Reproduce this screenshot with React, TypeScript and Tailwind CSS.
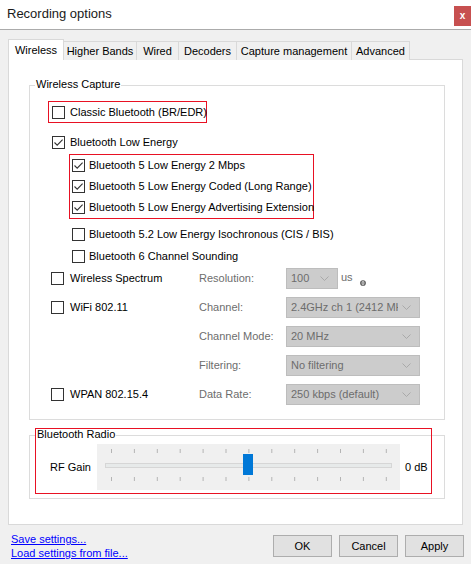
import React from 'react';

const tabs = [
  { name: 'Wireless', w: 'w-[56px]' },
  { name: 'Higher Bands', w: 'w-[74px]' },
  { name: 'Wired', w: 'w-[43px]' },
  { name: 'Decoders', w: 'w-[59px]' },
  { name: 'Capture management', w: 'w-[116px]' },
  { name: 'Advanced', w: 'w-[59px]' },
];

function Check({ checked }: { checked?: boolean }) {
  return (
    <span className="w-[13px] h-[13px] border border-[#333333] bg-white flex items-center justify-center shrink-0">
      {checked && (
        <svg width="11" height="11" viewBox="0 0 11 11">
          <path d="M1.5 5.5 L4.2 8.2 L9.6 2.6" stroke="#333333" strokeWidth="1.1" fill="none" />
        </svg>
      )}
    </span>
  );
}

function Select({ value, w }: { value: string; w: string }) {
  return (
    <div className={`h-[21px] ${w} bg-[#cccccc] border border-[#bdbdbd] flex items-center pl-[4px] pr-[8px] text-[#6d6d6d]`}>
      <span className="flex-1 overflow-hidden whitespace-nowrap">{value}</span>
      <svg width="9" height="5" viewBox="0 0 9 5" className="shrink-0 ml-[4px]">
        <path d="M0.5 0.5 L4.5 4.5 L8.5 0.5" stroke="#a9a9a9" fill="none" />
      </svg>
    </div>
  );
}

function OptionRow({ label, checked, select, selectW, value, extra }: any) {
  return (
    <div className="h-[21px] flex items-center">
      <div className="w-[169px] pl-[21px] flex items-center gap-[6px]">
        {label && <Check checked={checked} />}
        {label && <span className="whitespace-nowrap">{label}</span>}
      </div>
      <span className="w-[87px] text-[#6d6d6d] whitespace-nowrap">{select}</span>
      <Select value={value} w={selectW} />
      {extra}
    </div>
  );
}

function Slider() {
  const ticks = Array.from({ length: 13 }, (_, i) => 14.5 + i * 22.9);
  return (
    <svg width="303" height="46" viewBox="0 0 303 46" className="bg-[#f0f0f0] shrink-0">
      {ticks.map((x) => (
        <g key={x}>
          <line x1={x} y1="5" x2={x} y2="9" stroke="#b4b4b4" />
          <line x1={x} y1="33" x2={x} y2="37" stroke="#b4b4b4" />
        </g>
      ))}
      <rect x="8.5" y="19.5" width="286" height="4" fill="#e7eaea" stroke="#d6d6d6" />
      <rect x="146" y="10" width="10" height="21" fill="#0078d7" />
    </svg>
  );
}

export default function App() {
  return (
    <div className="w-[471px] h-[564px] bg-[#f0f0f0] text-[11px] text-black font-['Liberation_Sans',Arial,sans-serif] leading-none overflow-hidden">
      {/* Title bar */}
      <div className="h-[30px] bg-white border-b border-[#ababab] flex items-start">
        <span className="ml-[7px] mt-[7px] text-[13px] text-[#1a1a1a]">Recording options</span>
        <div className="ml-auto mt-[6px] w-[17px] h-[20px] bg-[#c75050] text-white text-[10px] font-bold flex items-center justify-center">
          x
        </div>
      </div>

      {/* Tabs */}
      <div className="flex items-end ml-[8px] mt-[9px] h-[21px] relative z-10">
        {tabs.map((t, i) =>
          i === 0 ? (
            <div key={t.name} className={`${t.w} h-[21px] bg-white border border-b-0 border-[#d9d9d9] flex items-center justify-center whitespace-nowrap`}>
              {t.name}
            </div>
          ) : (
            <div key={t.name} className={`${t.w} h-[19px] -ml-px bg-[#f0f0f0] border border-b-0 border-[#d9d9d9] flex items-center justify-center whitespace-nowrap`}>
              {t.name}
            </div>
          )
        )}
      </div>

      {/* Panel */}
      <div className="ml-[8px] -mt-px w-[455px] h-[466px] bg-white border border-[#d9d9d9] pt-[25px] pl-[20px]">
        {/* Wireless Capture */}
        <div className="relative w-[416px] h-[335px] border border-[#dcdcdc]">
          <span className="absolute -top-[7px] left-[5px] bg-white px-[1px]">Wireless Capture</span>

          <div className="mt-[15px] ml-[18px] w-[159px] h-[22px] border border-[#e81123] pl-[3px] flex items-center gap-[5px]">
            <Check />
            <span className="whitespace-nowrap">Classic Bluetooth (BR/EDR)</span>
          </div>

          <div className="h-[23px] mt-[8px] pl-[22px] flex items-center gap-[5px]">
            <Check checked />
            <span>Bluetooth Low Energy</span>
          </div>

          <div className="ml-[39px] w-[245px] h-[65px] border border-[#e81123] pl-[2px] flex flex-col justify-between py-[1px]">
            {['Bluetooth 5 Low Energy 2 Mbps', 'Bluetooth 5 Low Energy Coded (Long Range)', 'Bluetooth 5 Low Energy Advertising Extension'].map((l) => (
              <div key={l} className="h-[19px] flex items-center gap-[4px]">
                <Check checked />
                <span className="whitespace-nowrap">{l}</span>
              </div>
            ))}
          </div>

          <div className="mt-[4px]">
            {['Bluetooth 5.2 Low Energy Isochronous (CIS / BIS)', 'Bluetooth 6 Channel Sounding'].map((l) => (
              <div key={l} className="h-[22px] pl-[42px] flex items-center gap-[4px]">
                <Check />
                <span className="whitespace-nowrap">{l}</span>
              </div>
            ))}
          </div>

          <div className="flex flex-col gap-[8px] mt-[1px]">
            <OptionRow
              label="Wireless Spectrum"
              select="Resolution:"
              value="100"
              selectW="w-[52px]"
              extra={
                <div className="flex items-center ml-[3px] text-[#6d6d6d]">
                  <span className="-mt-[2px]">us</span>
                  <svg width="6" height="6" viewBox="0 0 6 6" className="ml-[7px] mt-[9px]">
                    <circle cx="3" cy="3" r="2.3" stroke="#555" fill="none" strokeWidth="1.1" />
                    <line x1="0.8" y1="3" x2="5.2" y2="3" stroke="#555" />
                  </svg>
                </div>
              }
            />
            <OptionRow label="WiFi 802.11" select="Channel:" value="2.4GHz ch 1 (2412 MHz)" selectW="w-[134px]" />
            <OptionRow select="Channel Mode:" value="20 MHz" selectW="w-[134px]" />
            <OptionRow select="Filtering:" value="No filtering" selectW="w-[134px]" />
            <OptionRow label="WPAN 802.15.4" select="Data Rate:" value="250 kbps (default)" selectW="w-[134px]" />
          </div>
        </div>

        {/* Bluetooth Radio */}
        <div className="relative mt-[15px] w-[416px] h-[64px] border border-[#dcdcdc]">
          <span className="absolute -top-[7px] left-[6px] bg-white px-[1px]">Bluetooth Radio</span>
          <div className="absolute -top-[8px] left-[5px] w-[397px] h-[66px] border border-[#e81123]" />
          <div className="flex items-center pt-[8px] pl-[20px]">
            <span className="w-[47px]">RF Gain</span>
            <Slider />
            <span className="ml-[5px]">0 dB</span>
          </div>
        </div>
      </div>

      {/* Footer */}
      <div className="flex items-start">
        <div className="ml-[11px] mt-[7px] flex flex-col text-[#0000ff] underline leading-[14px]">
          <span>Save settings...</span>
          <span>Load settings from file...</span>
        </div>
        <div className="ml-auto mr-[7px] mt-[10px] flex gap-[7px]">
          {['OK', 'Cancel', 'Apply'].map((b) => (
            <button key={b} className="w-[59px] h-[22px] bg-[#e1e1e1] border border-[#adadad] text-[11px] flex items-center justify-center">
              {b}
            </button>
          ))}
        </div>
      </div>
    </div>
  );
}
